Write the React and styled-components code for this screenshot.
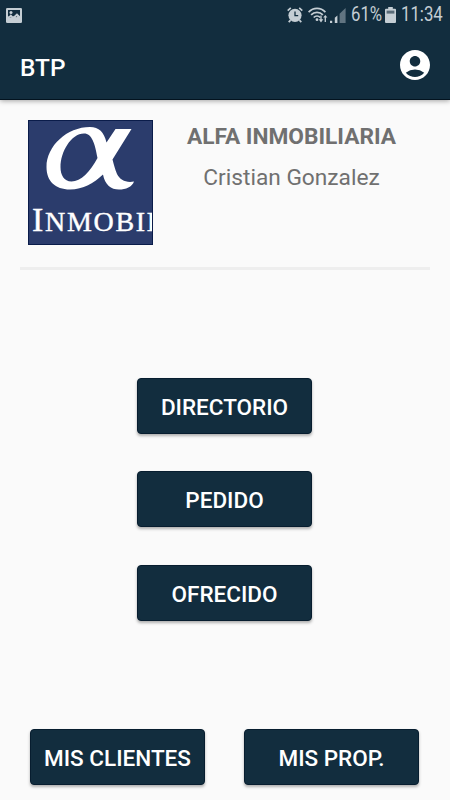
import React from 'react'
import styled, { createGlobalStyle } from 'styled-components'
import { MdAccountCircle } from 'react-icons/md'

const GlobalStyle = createGlobalStyle`
  * {
    box-sizing: border-box;
  }
  body {
    margin: 0;
    background-color: #fafafa;
    font-family: Roboto, "Liberation Sans", sans-serif;
  }
`;

const menu = ['DIRECTORIO', 'PEDIDO', 'OFRECIDO']
const footer = ['MIS CLIENTES', 'MIS PROP.']

const PictureIcon = () => (
  <svg width="16" height="15" viewBox="0 0 16 15">
    <rect x="0" y="0" width="16" height="15" rx="1.3" fill="#c5ced4" />
    <path d="M2 2h12v6.5l-1.6-1.7-2.1 2.4-3-1-2.6 1.9L2 7.9z" fill="#122d3e" />
    <circle cx="5" cy="4.6" r="1.5" fill="#c5ced4" />
    <path d="M2.2 9.2l2.6-3 2.4 2.6 3.8-3.6 3 3.4v2.2l-3-2.7-3 2.2z" fill="#c5ced4" />
  </svg>
)

const AlarmIcon = () => (
  <svg width="16" height="16" viewBox="0 0 16 16">
    <path d="M.7 3.6L3.8.9M15.3 3.6L12.2.9M3.6 13.2l-1.9 2M12.4 13.2l1.9 2" stroke="#c5ced4" strokeWidth="1.7" />
    <circle cx="8" cy="8.3" r="6.6" fill="#c5ced4" />
    <path d="M8 4.6v4h3.2" fill="none" stroke="#122d3e" strokeWidth="1.3" />
  </svg>
)

const WifiIcon = () => (
  <svg width="20" height="16" viewBox="0 0 20 16">
    <g fill="none" stroke="#c5ced4" strokeWidth="1.7">
      <path d="M.6 5.1C5.4.1 12.6.1 17.4 5.1" />
      <path d="M3.1 7.9c3.2-3.3 8.6-3.3 11.8 0" />
      <path d="M5.7 10.5c1.9-1.9 4.7-1.9 6.6 0" />
    </g>
    <circle cx="9" cy="12.7" r="1.4" fill="#c5ced4" />
    <path d="M13 8.5v5M17.3 15v-5" stroke="#c5ced4" strokeWidth="1.3" />
    <path d="M10.7 12.3h4.6L13 15.4zM15.2 10.6h4.2l-2.1-2.7z" fill="#c5ced4" />
  </svg>
)

const SignalIcon = () => (
  <svg width="16" height="15" viewBox="0 0 16 15">
    <path d="M0 12.7h2.2V15H0zM4.8 9.7L7.4 7.4V15H4.8z" fill="#c5ced4" />
    <path d="M9.6 5.7L15.6 0v15h-6z" fill="#617481" />
  </svg>
)

const BatteryIcon = () => (
  <svg width="11" height="16" viewBox="0 0 11 16">
    <path d="M3.2 0h4.6v1.8H10q1 0 1 1V15q0 1-1 1H1q-1 0-1-1V2.8q0-1 1-1h2.2z" fill="#c5ced4" />
    <path d="M1.6 3.6h7.8v3H1.6z" fill="#596b77" />
  </svg>
)

// brush loop of the agency logo
const LogoMark = () => (
  <svg width="123" height="80" viewBox="0 0 123 80">
    <path
      fill="#fff"
      fillRule="evenodd"
      d="M61 6C38 6 17.5 25 17.500 46C17.500 60 26 68.500 41 68.500C54 68.500 65 62 74 53.500C76 64 82 68.500 90 68.500C97 68.500 103 66 105 60.500C97 62 91 59 88 53C86 48 85 44 83.500 38.500L102.500 8H86.500L77.500 21.500C75 11 70 6 61 6ZM55 12.500C63 12.500 66 23 68.500 37C61 51 52 60.500 42.500 60.500C35 60.500 31.500 54 31.500 46C31.500 31 42 12.500 55 12.500Z"
    />
  </svg>
)

const App = () => {
  return (
    <Screen>
      <GlobalStyle />
      <Header>
        <StatusBar>
          <PictureIcon />
          <StatusRight>
            <AlarmIcon />
            <WifiIcon />
            <SignalIcon />
            <StatusText $width={30}><span>61%</span></StatusText>
            <BatteryIcon />
            <StatusText $width={41}><span>11:34</span></StatusText>
          </StatusRight>
        </StatusBar>
        <Toolbar>
          <Title>BTP</Title>
          <MdAccountCircle size={36} color="#fff" />
        </Toolbar>
      </Header>
      <Profile>
        <Logo>
          <LogoMark />
          <LogoName>I<small>NMOBIL</small></LogoName>
        </Logo>
        <Info>
          <Company>ALFA INMOBILIARIA</Company>
          <Agent>Cristian Gonzalez</Agent>
        </Info>
      </Profile>
      <Menu>
        {menu.map((label) => <Button key={label}>{label}</Button>)}
      </Menu>
      <Footer>
        {footer.map((label) => <Button key={label}>{label}</Button>)}
      </Footer>
    </Screen>
  )
}

export default App


const Screen = styled.div`
  display: flex;
  flex-direction: column;
  width: 450px;
  height: 800px;
  overflow: hidden;
  background-color: #fafafa;
`;

const Header = styled.header`
  height: 100px;
  flex: none;
  background-color: #122d3e;
  border-bottom: 1px solid #03131f;
  box-shadow: 0 1px 5px rgba(0, 0, 0, 0.35);
`;

const StatusBar = styled.div`
  display: flex;
  align-items: center;
  justify-content: space-between;
  height: 30px;
  padding: 0 8px 0 6px;
  svg {
    display: block;
    flex: none;
  }
`;

const StatusRight = styled.div`
  display: flex;
  align-items: center;
  svg:nth-of-type(1) { margin-right: 5px; }
  svg:nth-of-type(2) { margin-right: 2px; }
  svg:nth-of-type(3) { margin-right: 5px; }
  svg:nth-of-type(4) { margin: 0 5px 0 4px; }
`;

const StatusText = styled.div`
  width: ${(props) => props.$width}px;
  color: #c5ced4;
  font-size: 19.5px;
  line-height: 32px;
  white-space: nowrap;
  span {
    display: inline-block;
    transform: scaleX(0.86);
    transform-origin: left;
  }
`;

const Toolbar = styled.div`
  display: flex;
  align-items: center;
  justify-content: space-between;
  height: 70px;
  padding: 0 17px 0 20px;
`;

const Title = styled.h1`
  margin: 4px 0 0;
  color: #fff;
  font-size: 24.4px;
  font-weight: 500;
`;

const Profile = styled.section`
  display: flex;
  height: 170px;
  margin: 0 20px;
  padding: 20px 0 0 8px;
  border-bottom: 3px solid #eeeeee;
`;

const Logo = styled.div`
  width: 125px;
  height: 125px;
  flex: none;
  overflow: hidden;
  color: #fff;
  background-color: #2b3c6c;
  border: 1px solid #0a1c4a;
  svg {
    display: block;
  }
`;

const LogoName = styled.div`
  padding-left: 3px;
  font-family: "Liberation Serif", serif;
  font-size: 34px;
  letter-spacing: 1.7px;
  line-height: 38px;
  white-space: nowrap;
  -webkit-text-stroke: 0.4px #fff;
  small {
    font-size: 28px;
  }
`;

const Info = styled.div`
  flex: 1;
  color: #707070;
  text-align: center;
  font-size: 22.7px;
  line-height: 28px;
`;

const Company = styled.div`
  margin-top: 3px;
  font-weight: bold;
`;

const Agent = styled.div`
  margin-top: 13px;
`;

const Menu = styled.nav`
  display: flex;
  flex-direction: column;
  align-items: center;
  gap: 37.7px;
  padding: 107.6px 1px 0 0;
`;

const Footer = styled.footer`
  display: flex;
  gap: 39px;
  margin-top: auto;
  padding: 0 0 15px 30px;
`;

const Button = styled.button`
  width: 175px;
  height: 56px;
  padding: 2px 0 0;
  border: 1px solid #071d2f;
  border-radius: 4px;
  color: #fff;
  background-color: #122d3e;
  box-shadow: 0 2px 3px rgba(0, 0, 0, 0.3);
  font-family: inherit;
  font-size: 22.5px;
  font-weight: 500;
`;
